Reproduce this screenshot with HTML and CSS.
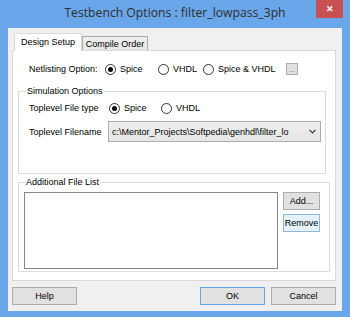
FILE: index.html
```html
<!DOCTYPE html>
<html lang="en">
<head>
    <meta charset="UTF-8">
    <title>Testbench Options</title>
    <link rel="stylesheet" href="styles.css">
</head>
<body>
    <div class="window">
        <div class="titlebar">
            <span class="title">Testbench Options : filter_lowpass_3ph</span>
            <span class="close">&#x2715;</span>
        </div>
        <div class="client">
            <div class="tabs">
                <div class="tab active">Design Setup</div>
                <div class="tab">Compile Order</div>
            </div>
            <div class="panel">
                <div class="row netlist">
                    <span class="label">Netlisting Option:</span>
                    <span class="radio checked w53"><i></i>Spice</span>
                    <span class="radio w45"><i></i>VHDL</span>
                    <span class="radio w83"><i></i>Spice &amp; VHDL</span>
                    <span class="dots">...</span>
                </div>
                <div class="group sim">
                    <span class="legend">Simulation Options</span>
                    <div class="row">
                        <span class="label wide">Toplevel File type</span>
                        <span class="radio checked w52"><i></i>Spice</span>
                        <span class="radio"><i></i>VHDL</span>
                    </div>
                    <div class="row combo-row">
                        <span class="label wide">Toplevel Filename</span>
                        <div class="combo">
                            <span class="combo-text">c:\Mentor_Projects\Softpedia\genhdl\filter_lo</span>
                            <svg class="chevron" width="7" height="5" viewBox="0 0 7 5"><path d="M0.5 0.8 L3.5 3.8 L6.5 0.8" fill="none" stroke="#333" stroke-width="1.2"/></svg>
                        </div>
                    </div>
                </div>
                <div class="group files">
                    <span class="legend">Additional File List</span>
                    <div class="files-body">
                        <div class="listbox"></div>
                        <div class="side">
                            <span class="btn small">Add...</span>
                            <span class="btn small hot">Remove</span>
                        </div>
                    </div>
                </div>
            </div>
            <div class="buttons">
                <span class="btn">Help</span>
                <span class="btn default push">OK</span>
                <span class="btn">Cancel</span>
            </div>
        </div>
    </div>
</body>
</html>
```

FILE: styles.css
```css
*{
    margin: 0;
    padding: 0;
    box-sizing: border-box;
}
body{
    background: #6aa6ea;
    font-family: "Liberation Sans", Arial, sans-serif;
    font-size: 9px;
    color: #000;
}
.window{
    width: 350px;
    height: 317px;
    background: #6aa6ea;
}
.titlebar{
    height: 28px;
    position: relative;
    display: flex;
    justify-content: center;
    align-items: center;
}
.title{
    font-family: "Open Sans", "Liberation Sans", sans-serif;
    font-size: 12.2px;
    color: #2e2e2e;
    padding-bottom: 3px;
}
.close{
    position: absolute;
    top: 0;
    right: 7px;
    width: 27px;
    height: 18px;
    background: #c75050;
    color: #fff;
    font-size: 9px;
    font-weight: bold;
    display: flex;
    justify-content: center;
    align-items: center;
}
.client{
    margin: 0 8px;
    height: 283px;
    background: #f0f0f0;
    padding: 5px 6px 0 4px;
}
.tabs{
    display: flex;
    align-items: flex-end;
    height: 17px;
    padding-left: 2px;
}
.tab{
    height: 14px;
    width: 66px;
    border: 1px solid #acacac;
    border-bottom: none;
    background: linear-gradient(#f0f0f0, #e5e5e5);
    display: flex;
    justify-content: center;
    align-items: center;
    padding-top: 1px;
}
.tab.active{
    height: 18px;
    width: 68px;
    background: #fff;
    border-color: #d9d9d9;
    margin-bottom: -1px;
    position: relative;
    z-index: 1;
    padding-top: 0;
    padding-bottom: 2px;
}
.panel{
    height: 231px;
    background: #fff;
    border: 1px solid #d9d9d9;
    padding: 8px 0 0 5px;
}
.row{
    display: flex;
    align-items: center;
    height: 20px;
}
.netlist{
    padding-left: 11px;
}
.label{
    width: 76px;
    white-space: nowrap;
}
.label.wide{
    width: 80px;
}
.radio{
    display: flex;
    align-items: center;
    white-space: nowrap;
}
.radio i{
    width: 11px;
    height: 11px;
    border: 1px solid #333;
    border-radius: 50%;
    background: #fff;
    margin-right: 4px;
    display: flex;
    justify-content: center;
    align-items: center;
}
.radio.checked i::after{
    content: "";
    width: 5px;
    height: 5px;
    border-radius: 50%;
    background: #000;
}
.w53{ width: 53px; }
.w52{ width: 52px; }
.w45{ width: 45px; }
.w83{ width: 83px; }
.dots{
    width: 12px;
    height: 12px;
    border: 1px solid #adadad;
    background: #e1e1e1;
    color: #555;
    font-size: 7px;
    display: flex;
    justify-content: center;
    align-items: flex-end;
    line-height: 8px;
}
.group{
    border: 1px solid #dcdcdc;
    margin-top: 12px;
}
.legend{
    display: block;
    width: max-content;
    height: 11px;
    line-height: 11px;
    margin-top: -6px;
    margin-left: 7px;
    padding: 0 1px;
    background: #fff;
}
.sim{
    width: 308px;
    height: 83px;
    padding-left: 10px;
}
.sim .legend{
    margin-left: -3px;
}
.sim .row{
    margin-top: 1px;
}
.sim .combo-row{
    height: 21px;
    margin-top: 3px;
}
.combo{
    width: 213px;
    height: 21px;
    border: 1px solid #acacac;
    background: linear-gradient(#efefef, #e5e5e5);
    display: flex;
    align-items: center;
    padding: 0 4px 0 3px;
    margin-left: -1px;
}
.combo-text{
    flex: 1;
    white-space: nowrap;
}
.chevron{
    margin-left: 5px;
}
.files{
    width: 312px;
    height: 90px;
    margin-top: 8px;
}
.files .legend{
    margin-left: 6px;
}
.files-body{
    display: flex;
    margin-top: 4px;
    padding-left: 5px;
}
.listbox{
    width: 254px;
    height: 77px;
    border: 1px solid #828790;
    background: #fff;
}
.side{
    display: flex;
    flex-direction: column;
    gap: 4px;
    margin-left: 5px;
}
.btn{
    display: flex;
    justify-content: center;
    align-items: center;
    width: 65px;
    height: 18px;
    border: 1px solid #adadad;
    background: #e1e1e1;
    white-space: nowrap;
}
.btn.small{
    width: 37px;
}
.btn.hot{
    background: #e5f1fb;
    border-color: #8fb6dc;
}
.btn.default{
    border-color: #5ea6ee;
}
.buttons{
    display: flex;
    gap: 6px;
    margin-top: 6px;
}
.push{
    margin-left: auto;
}
```
